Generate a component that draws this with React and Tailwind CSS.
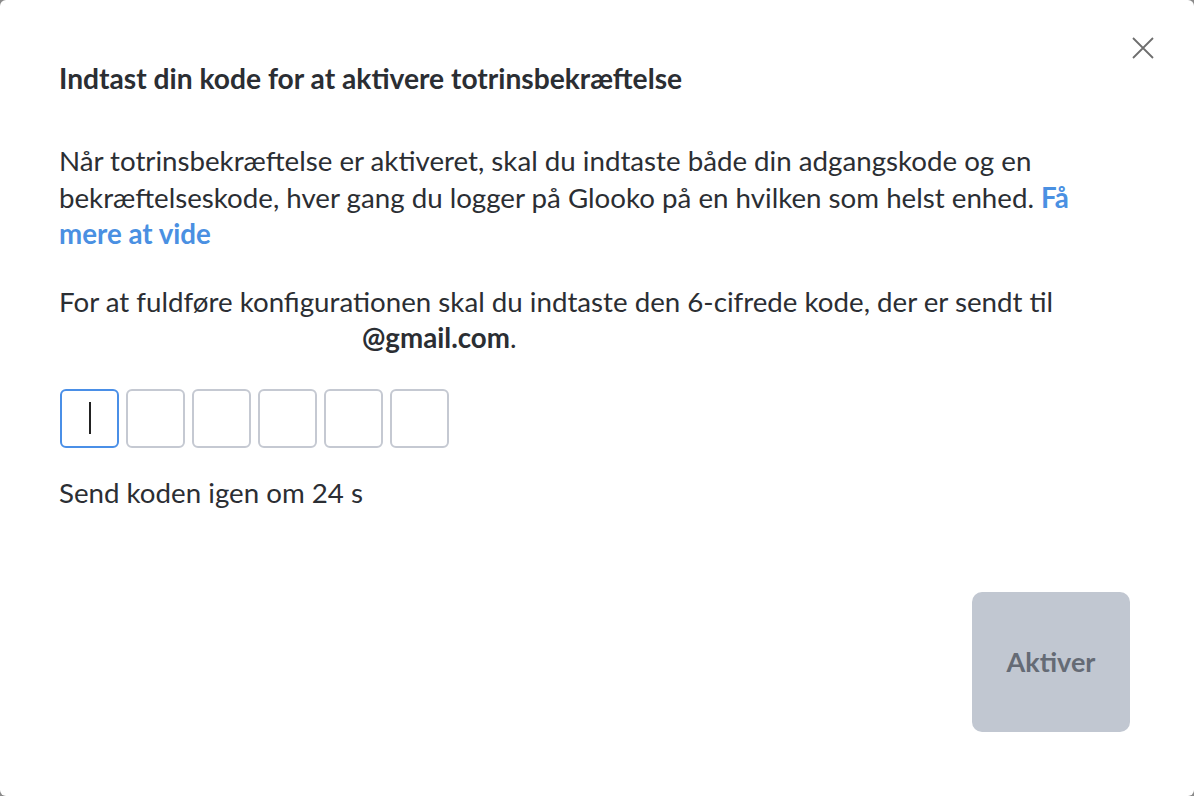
import { useState } from "react";

export default function App() {
  const [code] = useState(["", "", "", "", "", ""]);

  return (
    <div className="min-h-screen w-full bg-[#8a8a8a] font-['Lato',sans-serif] text-[#2b2e33]">
      <div className="relative flex h-[796px] w-[1194px] flex-col rounded-md bg-white px-[59px]">
        {/* Close button */}
        <button
          type="button"
          aria-label="Luk"
          className="absolute right-[38px] top-[35px] text-[#6e6e6e]"
        >
          <svg width="26" height="26" viewBox="0 0 26 26" fill="none" stroke="currentColor" strokeWidth="1.8">
            <path d="M3 3L23 23M23 3L3 23" />
          </svg>
        </button>

        <h1 className="mt-[62px] text-[28.2px] font-bold leading-[32px]">
          Indtast din kode for at aktivere totrinsbekræftelse
        </h1>

        <p className="mt-[49px] w-[1030px] text-[27.7px] leading-[36.5px]">
          Når totrinsbekræftelse er aktiveret, skal du indtaste både din adgangskode og en
          bekræftelseskode, hver gang du logger på Glooko på en hvilken som helst enhed.{" "}
          <a href="#" className="font-bold text-[#4a90e2]">
            Få mere at vide
          </a>
        </p>

        <p className="mt-[31px] text-[27.7px] leading-[36.5px]">
          For at fuldføre konfigurationen skal du indtaste den 6-cifrede kode, der er sendt til
          <br />
          <span className="inline-block w-[303px]" />
          <span className="font-bold">@gmail.com</span>.
        </p>

        {/* Code inputs */}
        <div className="mt-[32px] flex gap-[7px] pl-[1px]">
          {code.map((c, i) => (
            <div
              key={i}
              className={
                i === 0
                  ? "flex h-[59px] w-[59px] items-center justify-center rounded-[6px] border-2 border-[#4a8fe7]"
                  : "flex h-[59px] w-[59px] items-center justify-center rounded-[6px] border-2 border-[#c5c9d2]"
              }
            >
              {i === 0 && <span className="h-[32px] w-[2px] bg-[#222]" />}
            </div>
          ))}
        </div>

        <p className="mt-[29px] text-[27.7px] leading-[32px]">Send koden igen om 24 s</p>

        <div className="mt-auto mb-[64px] flex justify-end pr-[5px]">
          <button
            type="button"
            disabled
            className="h-[140px] w-[158px] rounded-[10px] bg-[#c1c7d1] text-[27px] font-bold text-[#656b75]"
          >
            Aktiver
          </button>
        </div>
      </div>
    </div>
  );
}
